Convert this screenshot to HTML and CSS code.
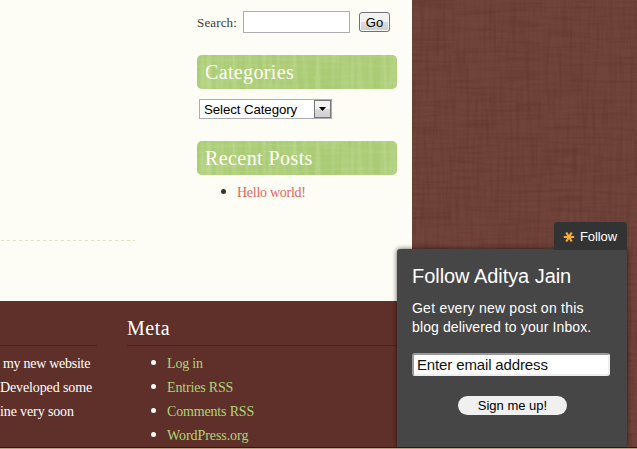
FILE: index.html
```html
<!DOCTYPE html>
<html lang="en">
<head>
<meta charset="utf-8">
<title>Aditya Jain</title>
<link rel="stylesheet" href="styles.css">
</head>
<body>
<svg class="texture" aria-hidden="true">
  <defs>
    <filter id="weave-h" x="0" y="0" width="100%" height="100%" color-interpolation-filters="sRGB">
      <feTurbulence type="fractalNoise" baseFrequency="0.022 0.3" numOctaves="2" seed="4"/>
      <feColorMatrix values="0 0 0 0 .34  0 0 0 0 .15  0 0 0 0 .12  2.6 0 0 0 -1.15"/>
    </filter>
    <filter id="weave-v" x="0" y="0" width="100%" height="100%" color-interpolation-filters="sRGB">
      <feTurbulence type="fractalNoise" baseFrequency="0.3 0.022" numOctaves="2" seed="9"/>
      <feColorMatrix values="0 0 0 0 .34  0 0 0 0 .15  0 0 0 0 .12  2.6 0 0 0 -1.15"/>
    </filter>
    <filter id="linen" x="0" y="0" width="100%" height="100%" color-interpolation-filters="sRGB">
      <feTurbulence type="fractalNoise" baseFrequency="0.2 0.012" numOctaves="2" seed="6"/>
      <feColorMatrix values="0 0 0 0 .80  0 0 0 0 .89  0 0 0 0 .64  2 0 0 0 -.7"/>
    </filter>
    <filter id="linen-h" x="0" y="0" width="100%" height="100%" color-interpolation-filters="sRGB">
      <feTurbulence type="fractalNoise" baseFrequency="0.02 0.3" numOctaves="2" seed="2"/>
      <feColorMatrix values="0 0 0 0 .80  0 0 0 0 .89  0 0 0 0 .64  2 0 0 0 -.8"/>
    </filter>
  </defs>
  <rect width="100%" height="100%" fill="#70443a"/>
  <rect width="100%" height="100%" filter="url(#weave-h)" opacity=".26"/>
  <rect width="100%" height="100%" filter="url(#weave-v)" opacity=".22"/>
</svg>
<div class="page">
  <main class="main">
    <div class="content"><hr class="divider"></div>
    <aside class="sidebar">
      <form class="search">
        <label for="s">Search:</label>
        <input id="s" class="search-input" type="text">
        <button class="go" type="button">Go</button>
      </form>
      <h2 class="ribbon"><svg class="linen"><rect width="100%" height="100%" filter="url(#linen)" opacity=".5"/><rect width="100%" height="100%" filter="url(#linen-h)" opacity=".25"/></svg><span class="categories">Categories</span></h2>
      <div class="select"><span>Select Category</span><i class="arrow"><svg width="7" height="4"><path d="M0 0h7L3.5 4z"/></svg></i></div>
      <h2 class="ribbon"><svg class="linen"><rect width="100%" height="100%" filter="url(#linen)" opacity=".5"/><rect width="100%" height="100%" filter="url(#linen-h)" opacity=".25"/></svg><span class="recent">Recent Posts</span></h2>
      <ul class="posts"><li><a>Hello world!</a></li></ul>
    </aside>
  </main>
  <footer class="footer">
    <section class="about">
      <h3 class="title"></h3>
      <p><span class="a1">my new website</span><br><span class="a2">Developed some</span><br><span class="a3">ine very soon</span></p>
    </section>
    <section class="meta">
      <h3 class="title">Meta</h3>
      <ul>
        <li><a class="m1">Log in</a></li>
        <li><a class="m2">Entries RSS</a></li>
        <li><a class="m3">Comments RSS</a></li>
        <li><a class="m4">WordPress.org</a></li>
      </ul>
    </section>
  </footer>
</div>
<div class="follow">
  <div class="tab">
    <svg width="12" height="12" viewBox="0 0 12 12"><path d="M.8 6h10.4M3.3 1.5l5.4 9M8.7 1.5l-5.4 9" stroke="#fba92f" stroke-width="2.2"/><circle cx="6" cy="6" r="1" fill="#ffc45c"/></svg>
    <span>Follow</span>
  </div>
  <div class="panel">
    <h3>Follow Aditya Jain</h3>
    <p><span class="f1">Get every new post on this</span><br><span class="f2">blog delivered to your Inbox.</span></p>
    <div class="email">Enter email address</div>
    <button class="sign" type="button">Sign me up!</button>
  </div>
</div>
<div class="edge"></div>
</body>
</html>
```
FILE: styles.css
```css
* { box-sizing: border-box; }
body {
  margin: 0;
  height: 449px;
  overflow: hidden;
  background: #70443a;
  font: 14px/24px "Liberation Serif", serif;
}
h2, h3, p, ul { margin: 0; padding: 0; font-weight: normal; }
ul { list-style: none; }
.texture { position: absolute; inset: 0; width: 100%; height: 100%; }
.page { position: relative; width: 412px; height: 447px; display: flex; flex-direction: column; }
.main { display: flex; height: 301px; background: #fdfdf5; }
.content { width: 135px; margin-right: 62px; padding-top: 240px; }
.divider {
  height: 1px;
  margin: 0;
  border: 0;
  background: repeating-linear-gradient(90deg, transparent 0 1px, #dfe2ba 1px 4px, transparent 4px 6px);
}
.sidebar { width: 200px; padding-top: 11px; color: #3b3b3b; }
.search { display: flex; height: 22px; margin-bottom: 22px; }
.search label { width: 46px; font-size: 13px; line-height: 23px; letter-spacing: .15px; }
.search-input { width: 107px; height: 22px; border: 1px solid #abadb3; background: #fff; padding: 0; }
.go {
  width: 31px;
  height: 20px;
  margin: 1px 0 0 9px;
  padding: 0;
  border: 1px solid #707070;
  border-radius: 3px;
  background: linear-gradient(#f2f2f2 50%, #dcdcdc 50%, #cfcfcf);
  box-shadow: inset 0 0 0 1px #f8f8f8;
  font: 13px/17px "Liberation Sans", sans-serif;
}
.ribbon {
  position: relative;
  height: 34px;
  padding-left: 8px;
  border-radius: 5px;
  overflow: hidden;
  background: #a9cb74;
  color: #fffff6;
  font-size: 20px;
  line-height: 34px;
}
.ribbon span { position: relative; white-space: nowrap; }
.linen { position: absolute; inset: 0; width: 100%; height: 100%; }
.categories { letter-spacing: .35px; }
.recent { letter-spacing: .42px; }
.select {
  display: flex;
  justify-content: space-between;
  width: 133px;
  height: 20px;
  margin: 10px 0 22px 2px;
  padding-left: 4px;
  border: 1px solid #abadb3;
  background: #fff;
  color: #000;
  font: 13.3px/19px "Liberation Sans", sans-serif;
  letter-spacing: -.1px;
}
.arrow {
  display: flex;
  align-items: center;
  justify-content: center;
  width: 17px;
  border: 1px solid #777;
  background: linear-gradient(#f2f2f2 50%, #dcdcdc 50%, #d0d0d0);
}
.posts { padding: 5px 0 0 40px; color: #e0685e; letter-spacing: -.27px; }
li { position: relative; height: 24px; line-height: 25px; white-space: nowrap; }
li::before {
  content: "";
  position: absolute;
  left: -16px;
  top: 9px;
  width: 5px;
  height: 5px;
  border-radius: 50%;
  background: #333;
}
.footer { display: flex; gap: 30px; height: 146px; background: #5f3029; color: #fff; }
.about { width: 97px; white-space: nowrap; }
.meta { flex: 1; }
.title { height: 45px; padding-top: 15px; border-bottom: 1px solid #47211d; font-size: 20px; line-height: 24px; letter-spacing: .5px; }
.about p { padding-top: 6px; }
.a1 { padding-left: 3px; letter-spacing: -.28px; }
.a2, .a3 { letter-spacing: -.12px; }
.meta ul { padding: 5px 0 0 40px; color: #afd57a; letter-spacing: -.17px; }
.meta .m4 { letter-spacing: -.07px; }
.meta li::before { background: #fff; }
.follow { position: absolute; left: 397px; top: 222px; width: 230px; font-family: "Liberation Sans", sans-serif; color: #fff; }
.tab {
  position: relative;
  z-index: 1;
  display: flex;
  align-items: center;
  gap: 4px;
  width: 73px;
  height: 28px;
  margin: 0 0 -1px auto;
  padding: 1px 0 0 9px;
  border-radius: 3px 3px 0 0;
  background: #333;
  font-size: 13px;
}
.tab span { padding-left: 1px; letter-spacing: -.1px; }
.panel {
  height: 198px;
  padding: 15px 15px 0;
  border-radius: 3px 0 0 0;
  background: #464646;
  box-shadow: 0 0 5px rgba(0, 0, 0, .65);
  clip-path: inset(-6px -6px 0 -6px);
}
.panel h3 { font-size: 20px; line-height: 24px; letter-spacing: -.05px; white-space: nowrap; }
.panel p { margin-top: 11px; font-size: 14px; line-height: 19px; white-space: nowrap; }
.f1 { letter-spacing: .23px; }
.f2 { letter-spacing: .12px; }
.email {
  width: 198px;
  height: 23px;
  margin-top: 16px;
  padding-left: 3px;
  border: 2px solid;
  border-color: #999 #eee #eee #999;
  border-radius: 3px;
  background: #fff;
  color: #111;
  font-size: 15px;
  line-height: 19px;
  letter-spacing: -.14px;
}
.sign {
  display: block;
  width: 109px;
  height: 19px;
  margin: 20px 0 0 46px;
  padding: 0;
  border: 0;
  border-radius: 10px;
  background: #f0f0f0;
  color: #000;
  font: 13px/19px "Liberation Sans", sans-serif;
}
.edge { position: absolute; left: 0; bottom: 0; width: 100%; height: 2px; border-top: 1px solid #2c1b14; background: #b8a381; }
```
